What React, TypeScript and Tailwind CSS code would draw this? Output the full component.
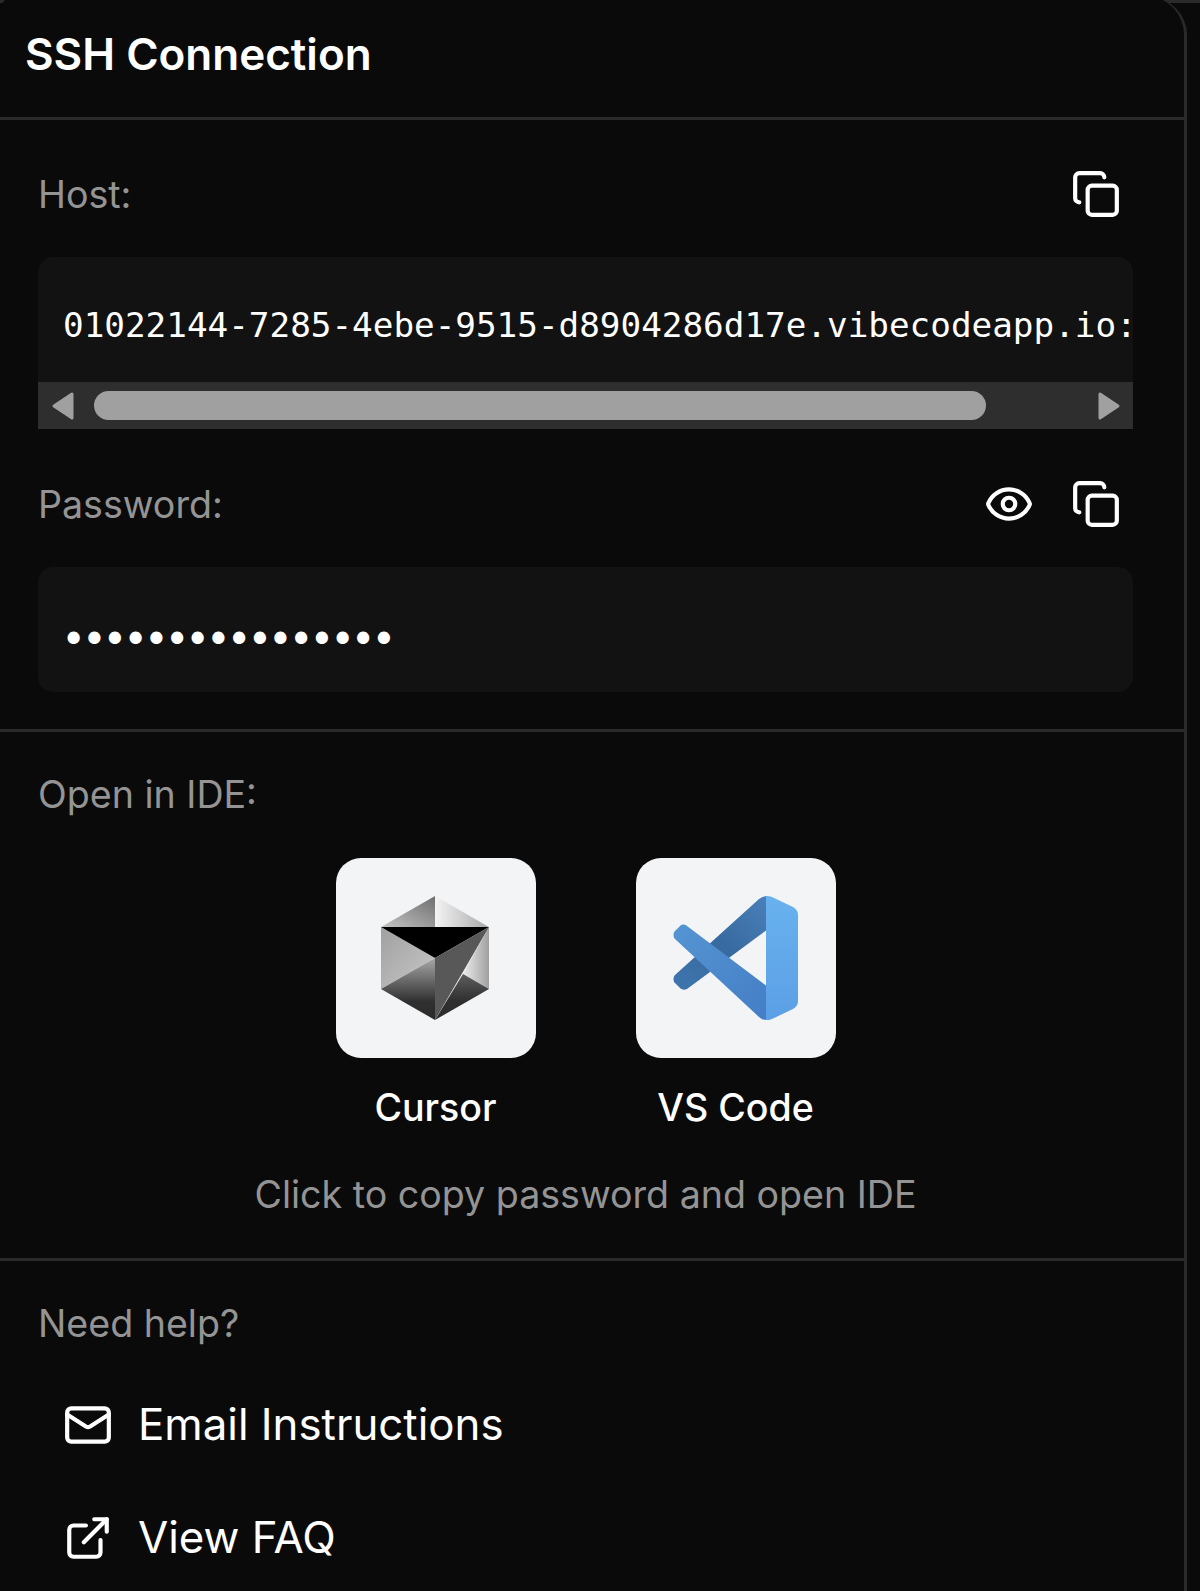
import { Copy, Eye, Mail, ExternalLink } from 'lucide-react';

const sans = "font-['Inter',sans-serif]";

function CursorLogo() {
  return (
    <svg viewBox="0 0 108 124" className="mr-[2px] w-[108px] h-[124px]">
      <defs>
        <linearGradient id="c-top-l" x1="0" y1="1" x2="1" y2="0">
          <stop offset="0" stopColor="#c4c4c4" />
          <stop offset="1" stopColor="#6e6e6e" />
        </linearGradient>
        <linearGradient id="c-top-r" x1="0" y1="0" x2="1" y2="0">
          <stop offset="0" stopColor="#f4f4f4" />
          <stop offset="1" stopColor="#a8a8a8" />
        </linearGradient>
        <linearGradient id="c-left" x1="0" y1="0" x2="1" y2="1">
          <stop offset="0" stopColor="#a0a0a0" />
          <stop offset="1" stopColor="#c8c8c8" />
        </linearGradient>
        <linearGradient id="c-bottom" x1="0" y1="0" x2="0" y2="1">
          <stop offset="0" stopColor="#a8a8a8" />
          <stop offset="0.7" stopColor="#303030" />
          <stop offset="1" stopColor="#2a2a2a" />
        </linearGradient>
        <linearGradient id="c-bottom-r" x1="0" y1="0" x2="0" y2="1">
          <stop offset="0" stopColor="#5e5e5e" />
          <stop offset="0.6" stopColor="#2e2e2e" />
        </linearGradient>
        <linearGradient id="c-right" x1="0" y1="0" x2="1" y2="0">
          <stop offset="0" stopColor="#ececec" />
          <stop offset="1" stopColor="#a0a0a0" />
        </linearGradient>
      </defs>
      <path d="M54 0L0 31h54z" fill="url(#c-top-l)" />
      <path d="M54 0l54 31H54z" fill="url(#c-top-r)" />
      <path d="M0 31l54 31L0 93z" fill="url(#c-left)" />
      <path d="M108 31v62L82 78z" fill="url(#c-right)" />
      <path d="M0 93l54-31v62z" fill="url(#c-bottom)" />
      <path d="M54 124l28-46 26 15z" fill="url(#c-bottom-r)" />
      <path d="M0 31h108L54 62z" fill="#000" />
      <path d="M108 31L54 124V62z" fill="#585858" />
    </svg>
  );
}

function VSCodeLogo() {
  return (
    <svg viewBox="0 0 125 124" className="w-[125px] h-[124px]">
      <defs>
        <linearGradient id="v-back" x1="0" y1="1" x2="1" y2="0">
          <stop offset="0" stopColor="#3f75ae" />
          <stop offset="0.5" stopColor="#376a9f" />
          <stop offset="1" stopColor="#4a80ba" />
        </linearGradient>
        <linearGradient id="v-front" x1="0" y1="0" x2="1" y2="1">
          <stop offset="0" stopColor="#5595d3" />
          <stop offset="1" stopColor="#447dc5" />
        </linearGradient>
        <linearGradient id="v-side" x1="0" y1="0" x2="0" y2="1">
          <stop offset="0" stopColor="#68b2ee" />
          <stop offset="1" stopColor="#5b9fe6" />
        </linearGradient>
      </defs>
      <path d="M86 3L2 79c-2 2-2 6 0 8l5 5c2 2 5 2 7 1l81-60V0c-3 0-6 1-9 3z" fill="url(#v-back)" />
      <path d="M14 30c-2-2-5-2-7 0l-5 5c-2 2-2 6 0 8l84 78c3 3 6 3 9 3V91z" fill="url(#v-front)" />
      <path d="M93 0c2 0 4 0 6 1l21 10c3 2 5 4 5 8v86c0 4-2 6-5 8l-21 10c-2 1-4 1-6 1z" fill="url(#v-side)" />
    </svg>
  );
}

function ScrollArrow({ dir }: { dir: 'left' | 'right' }) {
  return (
    <svg viewBox="0 0 24 30" className="w-[24px] h-[30px] text-[#a0a0a0]">
      <path
        d={dir === 'left' ? 'M21 3v24L3 15z' : 'M3 3v24l18-12z'}
        fill="currentColor"
        stroke="currentColor"
        strokeWidth="3"
        strokeLinejoin="round"
      />
    </svg>
  );
}

function IdeTile({ name, children }: { name: string; children: React.ReactNode }) {
  return (
    <div className="flex flex-col items-center gap-[30px]">
      <div className="w-[200px] h-[200px] rounded-[25px] bg-[#f3f4f6] flex items-center justify-center">
        {children}
      </div>
      <span className="text-[37.6px] leading-[40px] font-medium text-white">{name}</span>
    </div>
  );
}

function FieldHeader({ label, children }: { label: string; children: React.ReactNode }) {
  return (
    <div className="flex items-center justify-between h-[50px]">
      <span className="pt-[1px] text-[37.6px] leading-[50px] text-[#949494]">{label}</span>
      <div className="flex items-center gap-[37px] pr-[12px]">{children}</div>
    </div>
  );
}

export default function App() {
  return (
    <div className={`h-[1591px] w-[1200px] overflow-hidden bg-[#0a0a0a] ${sans}`}>
      <div className="h-[3px] bg-[#2a2a2a]" />
      <div className="relative -mt-[6px] w-[1187px] h-[1594px] bg-[#0a0a0a] border-r-[3px] border-[#2a2a2a] rounded-tr-[38px] rounded-tl-[14px]">
        <header className="h-[123px] border-b-[3px] border-[#2a2a2a] pl-[25px] pt-[30px]">
          <h2 className="text-[44px] leading-[54px] font-semibold text-white">SSH Connection</h2>
        </header>

        <section className="h-[612px] border-b-[3px] border-[#2a2a2a] pl-[38px] pr-[51px] pt-[49px]">
          <FieldHeader label="Host:">
            <Copy className="w-[50px] h-[50px] text-white" strokeWidth={2} />
          </FieldHeader>
          <div className="mt-[38px] h-[172px] rounded-t-[15px] bg-[#121212] overflow-hidden flex flex-col">
            <div className="flex-1 flex items-center pt-[12px] pl-[25px] font-['DejaVu_Sans_Mono',monospace] text-[34.3px] text-white whitespace-nowrap">
              01022144-7285-4ebe-9515-d8904286d17e.vibecodeapp.io:
            </div>
            <div className="h-[47px] bg-[#2e2e2e] flex items-center pl-[13px] pr-[12px]">
              <ScrollArrow dir="left" />
              <div className="ml-[19px] w-[892px] h-[29px] rounded-full bg-[#a0a0a0]" />
              <div className="ml-auto">
                <ScrollArrow dir="right" />
              </div>
            </div>
          </div>

          <div className="mt-[50px]">
            <FieldHeader label="Password:">
              <Eye className="w-[50px] h-[50px] text-white" strokeWidth={2} />
              <Copy className="w-[50px] h-[50px] text-white" strokeWidth={2} />
            </FieldHeader>
          </div>
          <div className="mt-[38px] h-[125px] rounded-[15px] bg-[#121212] flex items-center pt-[19px] pl-[23px] font-['DejaVu_Sans_Mono',monospace] text-[42px] tracking-[-4.6px] text-white whitespace-nowrap">
            ••••••••••••••••
          </div>
        </section>

        <section className="h-[529px] border-b-[3px] border-[#2a2a2a] pl-[38px] pr-[51px] pt-[38px]">
          <div className="text-[37.6px] leading-[50px] text-[#949494]">Open in IDE:</div>
          <div className="mt-[38px] flex justify-center gap-[100px]">
            <IdeTile name="Cursor">
              <CursorLogo />
            </IdeTile>
            <IdeTile name="VS Code">
              <VSCodeLogo />
            </IdeTile>
          </div>
          <p className="mt-[42px] text-center text-[37.6px] leading-[50px] text-[#949494]">
            Click to copy password and open IDE
          </p>
        </section>

        <section className="pl-[38px] pt-[38px]">
          <div className="text-[37.6px] leading-[50px] text-[#949494]">Need help?</div>
          <div className="mt-[46px] flex flex-col gap-[53px] pl-[25px]">
            <div className="flex items-center gap-[25px] h-[60px]">
              <Mail className="w-[50px] h-[50px] text-white" strokeWidth={2} />
              <span className="text-[43.8px] leading-[60px] text-white">Email Instructions</span>
            </div>
            <div className="flex items-center gap-[25px] h-[60px]">
              <ExternalLink className="w-[50px] h-[50px] text-white" strokeWidth={2} />
              <span className="text-[43.8px] leading-[60px] text-white">View FAQ</span>
            </div>
          </div>
        </section>
      </div>
    </div>
  );
}
